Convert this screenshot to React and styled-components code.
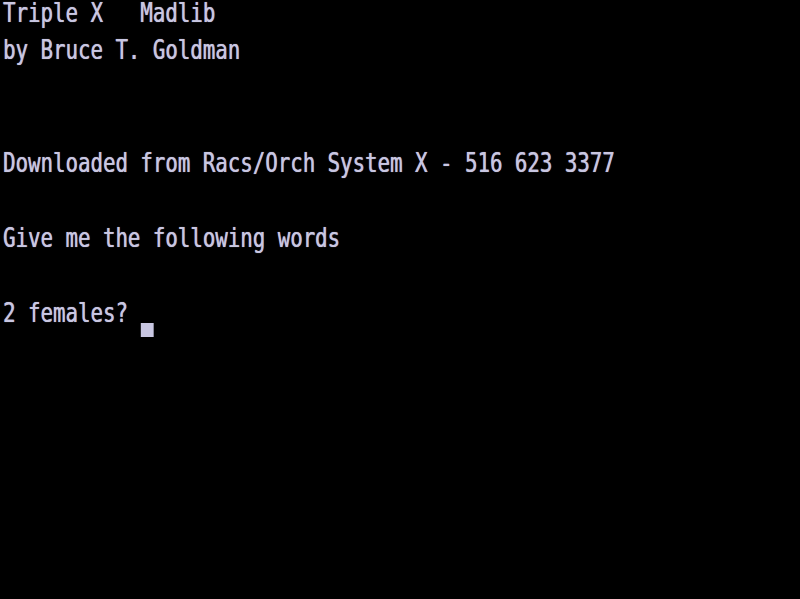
import React from 'react';
import styled, { createGlobalStyle } from 'styled-components';

const GlobalStyle = createGlobalStyle`
    html, body {
        margin: 0;
        padding: 0;
        background: #000;
    }
`;

const Screen = styled.div`
    width: 800px;
    height: 599px;
    background-color: #000;
`;

const Terminal = styled.div`
    width: 1050px;
    padding-left: 4px;
    transform: scaleX(0.757);
    transform-origin: 0 0;
    font-family: "DejaVu Sans Mono", "Liberation Mono", monospace;
    font-size: 27.4px;
    color: #c9c7e2;
    text-shadow: 0 0 1px rgba(201, 199, 226, 0.8), 0.5px 0 0 rgba(201, 199, 226, 0.5);
`;

const Line = styled.div`
    height: 37.44px;
    line-height: 26px;
    white-space: pre;
`;

const Cursor = styled.span`
    display: inline-block;
    vertical-align: top;
    width: 17px;
    height: 14px;
    margin-top: 23.5px;
    margin-left: 1px;
    background-color: #c9c7e2;
`;

const lines = [
    'Triple X   Madlib',
    'by Bruce T. Goldman',
    '',
    '',
    'Downloaded from Racs/Orch System X - 516 623 3377',
    '',
    'Give me the following words',
    '',
];

const App = () => {
    return (
        <Screen>
            <GlobalStyle />
            <Terminal>
                {lines.map((text, i) => (
                    <Line key={i}>{text}</Line>
                ))}
                <Line>
                    {'2 females? '}
                    <Cursor />
                </Line>
            </Terminal>
        </Screen>
    );
};

export default App;
